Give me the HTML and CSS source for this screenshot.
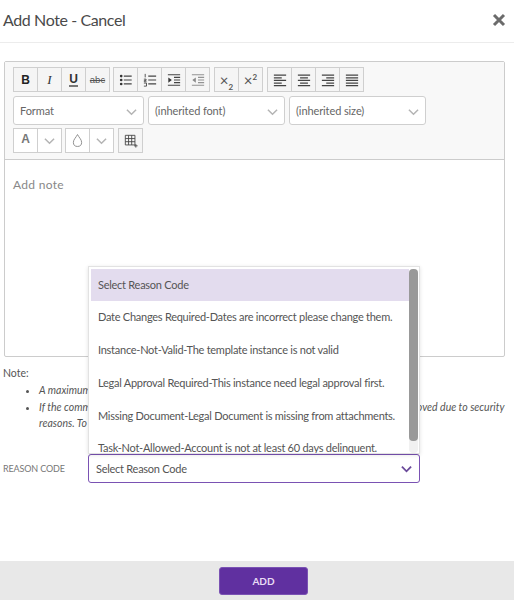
FILE: index.html
```html
<!DOCTYPE html>
<html lang="en">
<head>
<meta charset="utf-8">
<title>Add Note - Cancel</title>
<link rel="stylesheet" href="styles.css">
</head>
<body>
<div class="modal">
  <header class="head">
    <h1>Add Note - Cancel</h1>
    <svg class="close" viewBox="0 0 14 14"><path d="M2 2l10 10M12 2L2 12"/></svg>
  </header>
  <main class="content">
    <section class="editor">
      <div class="toolbar">
        <div class="row">
          <div class="group">
            <span class="btn b">B</span><span class="btn i">I</span><span class="btn u"><span>U</span></span><span class="btn s">abc</span>
          </div>
          <div class="group">
            <span class="btn"><svg class="ic" viewBox="0 0 16 16"><path class="dk" d="M5.500 3.500h9M5.500 8h9M5.500 12.500h9" fill="none"/><circle cx="2.500" cy="3.500" r="1.500"/><circle cx="2.500" cy="8" r="1.500"/><circle cx="2.500" cy="12.500" r="1.500"/></svg></span>
            <span class="btn"><svg class="ic" viewBox="0 0 16 16"><path class="dk" d="M6 3.500h9M6 8h9M6 12.500h9" fill="none"/><path class="thin" d="M2.500 1v4M1 7h2.500v1.500H1.500v1.500h2.500M1 11.500h3v3.500H1" fill="none"/></svg></span>
            <span class="btn"><svg class="ic" viewBox="0 0 16 16"><path class="dk" d="M1 2h14M8 5h7M8 8h7M8 11h7M1 14h14" fill="none"/><path d="M1.500 5l4 3-4 3z"/></svg></span>
            <span class="btn"><svg class="ic lt" viewBox="0 0 16 16"><path class="dk" d="M1 2h14M8 5h7M8 8h7M8 11h7M1 14h14" fill="none"/><path d="M5.500 5l-4 3 4 3z"/></svg></span>
          </div>
          <div class="group">
            <span class="btn sc"><span>×<sub>2</sub></span></span><span class="btn sc"><span>×<sup>2</sup></span></span>
          </div>
          <div class="group">
            <span class="btn"><svg class="ic" viewBox="0 0 16 16"><path class="dk" d="M1 2.500h14M1 5.500h9M1 8.500h14M1 11.500h9M1 14.500h14" fill="none"/></svg></span>
            <span class="btn"><svg class="ic" viewBox="0 0 16 16"><path class="dk" d="M1 2.500h14M3.500 5.500h9M1 8.500h14M3.500 11.500h9M1 14.500h14" fill="none"/></svg></span>
            <span class="btn"><svg class="ic" viewBox="0 0 16 16"><path class="dk" d="M1 2.500h14M6 5.500h9M1 8.500h14M6 11.500h9M1 14.500h14" fill="none"/></svg></span>
            <span class="btn"><svg class="ic" viewBox="0 0 16 16"><path class="dk" d="M1 2.500h14M1 5.500h14M1 8.500h14M1 11.500h14M1 14.500h14" fill="none"/></svg></span>
          </div>
        </div>
        <div class="row selects">
          <div class="sel w1"><span>Format</span><svg class="chev" viewBox="0 0 12 8"><path d="M1 1.500l5 5 5-5"/></svg></div>
          <div class="sel w2"><span>(inherited font)</span><svg class="chev" viewBox="0 0 12 8"><path d="M1 1.500l5 5 5-5"/></svg></div>
          <div class="sel w3"><span>(inherited size)</span><svg class="chev" viewBox="0 0 12 8"><path d="M1 1.500l5 5 5-5"/></svg></div>
        </div>
        <div class="row third">
          <div class="group plain">
            <span class="btn letter">A</span><span class="btn"><svg class="chev small" viewBox="0 0 12 8"><path d="M1 1.500l5 5 5-5"/></svg></span>
          </div>
          <div class="group plain">
            <span class="btn"><svg class="drop" viewBox="0 0 12 16"><path d="M6 1.500C4.500 4.500 1.500 7 1.500 10a4.500 4.500 0 0 0 9 0C10.500 7 7.500 4.500 6 1.500z"/></svg></span><span class="btn"><svg class="chev small" viewBox="0 0 12 8"><path d="M1 1.500l5 5 5-5"/></svg></span>
          </div>
          <div class="group">
            <span class="btn"><svg class="ic" viewBox="0 0 16 16"><path class="thin" d="M1.500 1.500h11v11h-11zM1.500 5.200h11M1.500 8.800h11M5.200 1.500v11M8.800 1.500v11M13.500 11.500v4M11.500 13.500h4" fill="none"/></svg></span>
          </div>
        </div>
      </div>
      <div class="area">Add note</div>
    </section>
    <section class="note">
      <p>Note:</p>
      <ul>
        <li>A maximum of 4000 characters are allowed for a note.</li>
        <li>If the comment contains any scripts or unsafe HTML tags then all those tags will be removed due to security<br>reasons. To keep them, please add the content as an attachment instead.</li>
      </ul>
    </section>
    <section class="reason">
      <label>REASON CODE</label>
      <div class="combo">
        <span>Select Reason Code</span>
        <svg class="chev purple" viewBox="0 0 12 8"><path d="M1 1.500l5 5 5-5"/></svg>
        <div class="menu">
          <div class="list">
            <div class="opt on">Select Reason Code</div>
            <div class="opt">Date Changes Required-Dates are incorrect please change them.</div>
            <div class="opt">Instance-Not-Valid-The template instance is not valid</div>
            <div class="opt">Legal Approval Required-This instance need legal approval first.</div>
            <div class="opt">Missing Document-Legal Document is missing from attachments.</div>
            <div class="opt">Task-Not-Allowed-Account is not at least 60 days delinquent.</div>
          </div>
          <div class="track"><div class="thumb"></div></div>
        </div>
      </div>
    </section>
  </main>
  <footer class="foot"><button class="add" type="button">ADD</button></footer>
</div>
</body>
</html>
```

FILE: styles.css
```css
* { box-sizing: border-box; }
html, body { margin: 0; padding: 0; height: 100%; background: #fff; }
body { font-family: Lato, "Liberation Sans", sans-serif; color: #555; overflow: hidden; }
.modal { width: 514px; height: 600px; display: flex; flex-direction: column; }
.head { height: 43px; flex: none; border-bottom: 1px solid #ececec; display: flex; align-items: center; justify-content: space-between; padding: 0 8px 3px 3px; }
.head h1 { margin: 0; font-size: 16px; font-weight: 400; color: #4a4a4a; letter-spacing: -.4px; }
.close { width: 14px; height: 14px; }
.close path { fill: none; stroke: #6b6b6b; stroke-width: 3; }
.content { flex: 1; padding: 18px 9px 0 3px; position: relative; }
.editor { width: 501px; height: 296px; margin-left: 1px; border: 1px solid #ccc; border-radius: 2px; display: flex; flex-direction: column; }
.toolbar { height: 98px; flex: none; background: #f8f8f8; border-bottom: 1px solid #ccc; padding: 5px 8px 0; }
.row { display: flex; }
.group { display: flex; border: 1px solid #cfcfcf; background: #f5f5f5; margin-right: 4px; height: 25px; }
.group:first-child { margin-right: 3px; }
.group.plain { background: #fff; }
.btn { width: 24px; height: 23px; display: flex; align-items: center; justify-content: center; border-left: 1px solid #cfcfcf; font-size: 13px; color: #333; }
.btn:first-child { border-left: 0; width: 23px; }
.btn.b { font-family: "Liberation Sans", sans-serif; font-weight: 700; font-size: 12px; color: #222; }
.btn.i { font-family: "Liberation Serif", serif; font-style: italic; font-size: 13px; color: #333; }
.btn.u { font-family: "Liberation Sans", sans-serif; font-weight: 700; font-size: 12px; color: #333; }
.btn.u span { border-bottom: 2px solid #777; line-height: 12px; }
.btn.s { font-family: "Liberation Sans", sans-serif; text-decoration: line-through; font-size: 9.500px; color: #555; }
.btn.sc { font-size: 15px; color: #555; }
.btn.sc sub, .btn.sc sup { font-size: 8px; font-weight: 700; line-height: 0; }
.btn.letter { font-family: "Liberation Sans", sans-serif; font-weight: 700; font-size: 12px; color: #777; padding-bottom: 3px; }
.ic { width: 14px; height: 14px; fill: #333; }
.ic.lt { opacity: .55; }
.ic .dk { stroke: #444; stroke-width: 1.300; }
.ic .thin { stroke: #444; stroke-width: 1; }
.selects { gap: 4px; margin-top: 4px; }
.third { margin-top: 3px; }
.sel { height: 29px; background: #fff; border: 1px solid #cfcfcf; border-radius: 3px; display: flex; align-items: center; justify-content: space-between; padding: 0 6px; font-size: 11px; letter-spacing: -.1px; color: #666; }
.w1 { width: 131px; }
.w2 { width: 137px; }
.w3 { width: 137px; }
.chev { width: 11px; height: 8px; flex: none; margin-top: 2px; }
.chev path { fill: none; stroke: #b4b4b4; stroke-width: 1.600; }
.chev.small { margin-top: 0; }
.chev.purple path { stroke: #6a4a9a; stroke-width: 2; }
.drop { width: 11px; height: 15px; }
.drop path { fill: #fff; stroke: #888; stroke-width: 1; }
.area { flex: 1; padding: 17px 8px; font-size: 12px; color: #888; letter-spacing: .3px; }
.note { margin-top: 8px; font-size: 10.500px; color: #555; }
.note p { margin: 0; line-height: 16px; }
.note ul { margin: 1px 0 0; padding: 0 0 0 36px; list-style: disc; }
.note li { font-style: italic; line-height: 16.500px; white-space: nowrap; }
.reason { display: flex; align-items: center; margin-top: 22px; }
.reason label { width: 85px; font-size: 9px; letter-spacing: -.15px; color: #777; }
.combo { position: relative; width: 332px; height: 29px; border: 1px solid #7a52b3; border-radius: 3px; background: #fff; display: flex; align-items: center; justify-content: space-between; padding: 0 7px; font-size: 11px; letter-spacing: -.26px; color: #555; }
.menu { position: absolute; left: -1px; bottom: 28px; width: 332px; height: 188px; background: #fff; border: 1px solid #e2e2e2; box-shadow: 0 1px 4px rgba(0,0,0,.12); padding: 2px 0 0 2px; overflow: hidden; display: flex; }
.list { flex: 1; overflow: hidden; }
.opt { height: 32.800px; line-height: 32.800px; padding-left: 7px; white-space: nowrap; color: #555; }
.opt.on { background: #e3dcee; }
.track { width: 9px; flex: none; margin-right: 1px; background: #f1f1f1; border-radius: 4px; height: 184px; }
.thumb { height: 172px; background: #999; border-radius: 4px; }
.foot { height: 39px; flex: none; background: #e8e8e8; padding: 6px 0 0 219px; }
.add { width: 89px; height: 28px; background: #6030a0; color: #e8dcf5; border: 1px solid #7a52b3; border-radius: 3px; font-family: Lato, sans-serif; font-size: 10px; font-weight: 700; padding: 0; }
```
